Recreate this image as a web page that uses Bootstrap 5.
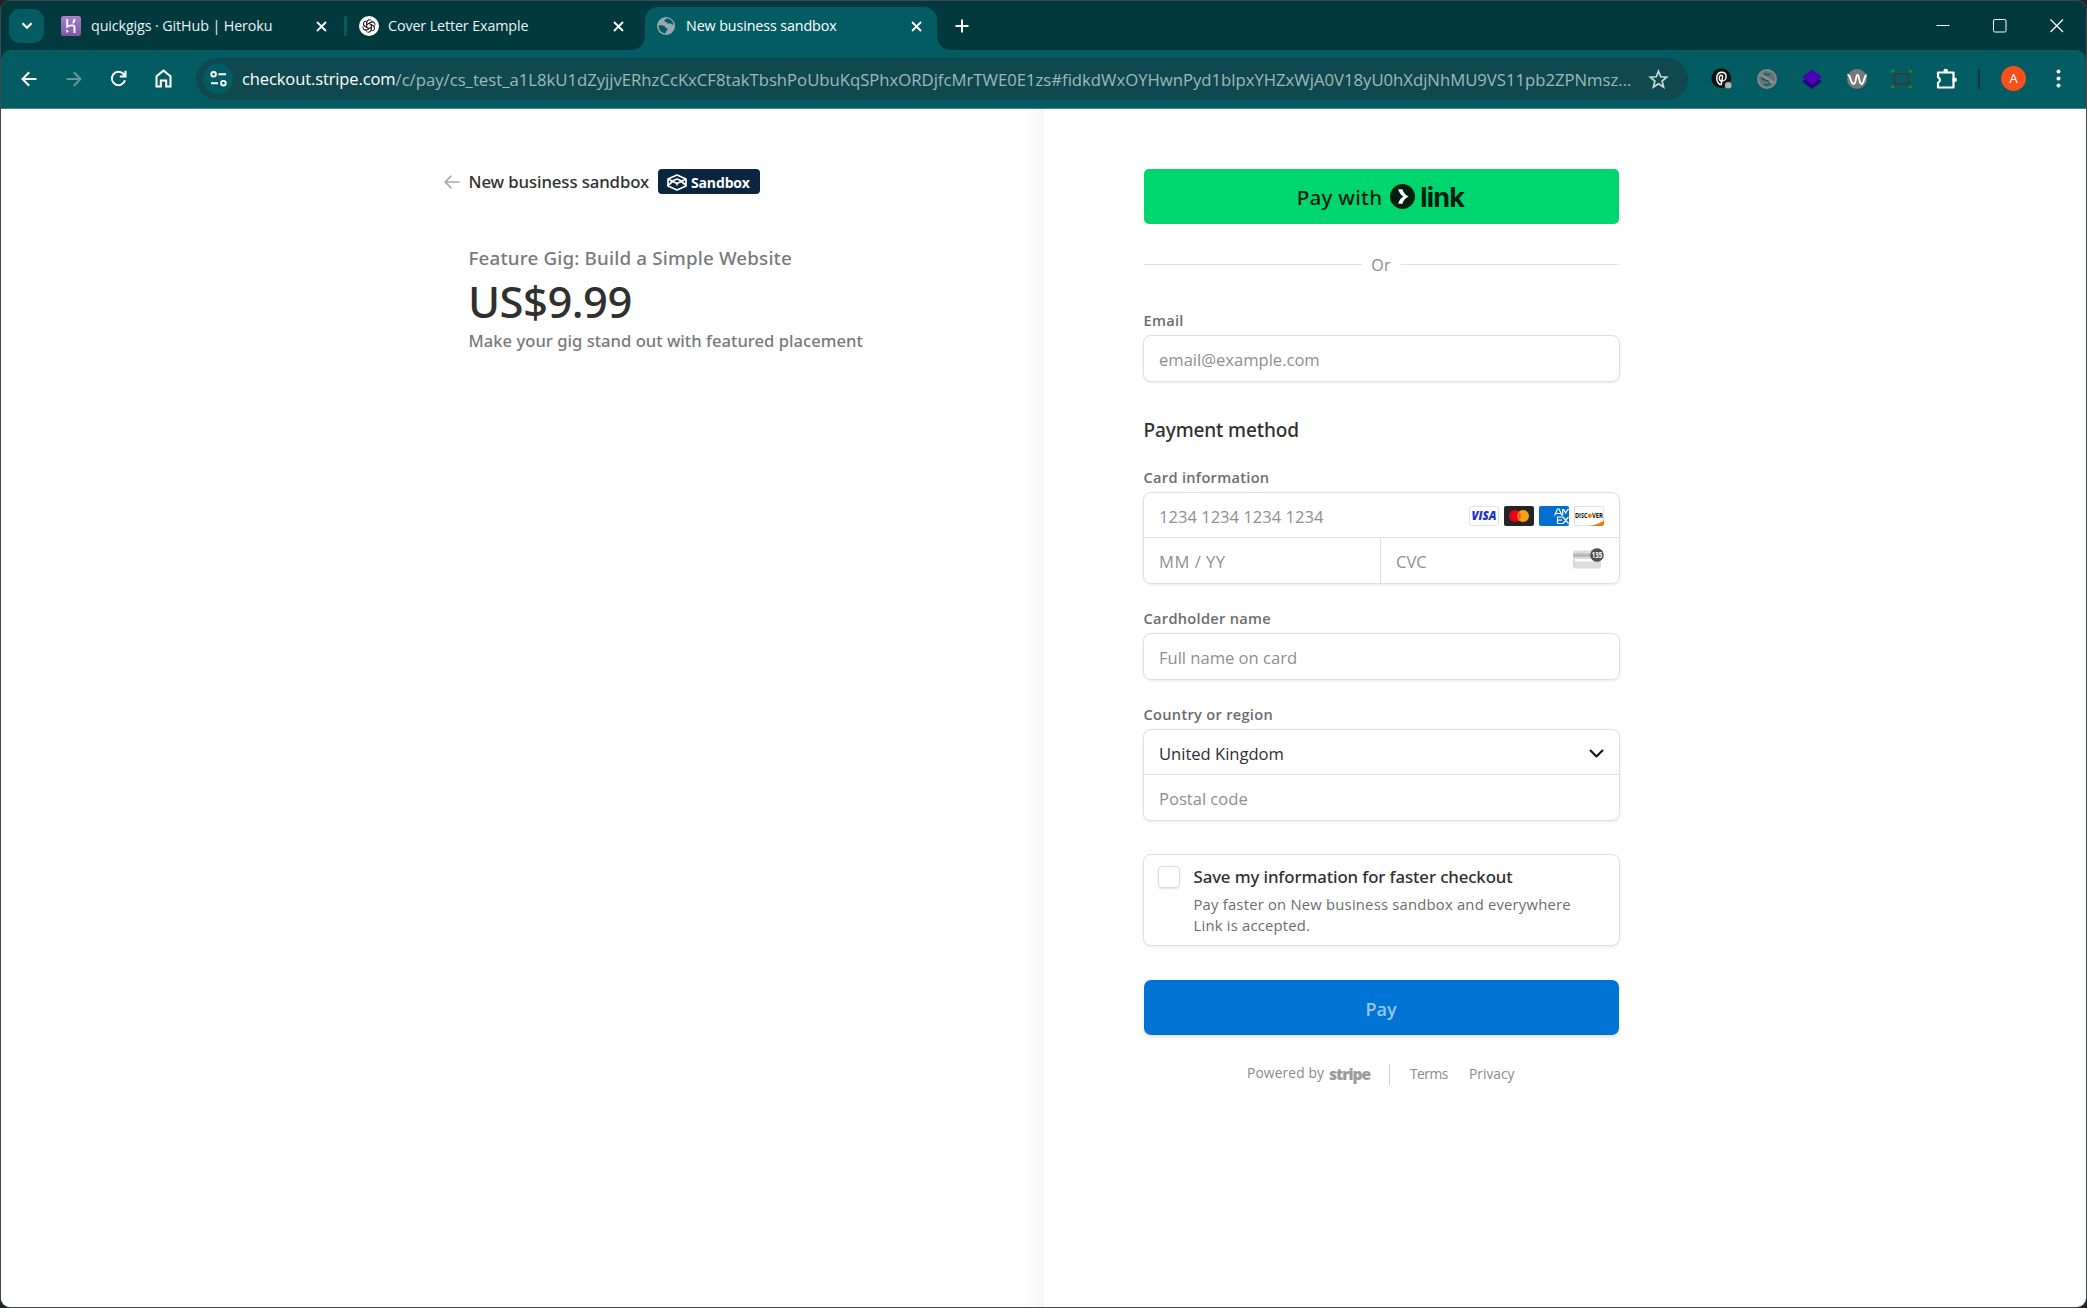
<!DOCTYPE html>
<html lang="en">
<head>
<meta charset="utf-8">
<title>New business sandbox</title>
<link rel="stylesheet" href="https://cdn.jsdelivr.net/npm/bootstrap@5.3.0/dist/css/bootstrap.min.css">
<script src="https://cdn.jsdelivr.net/npm/bootstrap@5.3.0/dist/js/bootstrap.bundle.min.js"></script>
<style>
  html, body { height: 100%; }
  body { font-family: "Open Sans", "Noto Sans", sans-serif; background: #232326; color: #303030; overflow: hidden; }
  svg { display: block; flex: none; }
  .window { height: 1308px; border: 1px solid #444648; border-radius: 10px; background: #02393f; }

  /* tab strip */
  .tabstrip { height: 49px; color: #e9f4f4; font-size: 14.3px; letter-spacing: -.11px; }
  .tab-search { width: 35px; height: 34px; margin: 0 0 0 8px; border-radius: 11px; background: #045c63; }
  .tab { height: 49px; padding-top: 1px; white-space: nowrap; }
  .tab-one { width: 300px; padding-left: 17px; }
  .tab-one .shut { margin-right: 17px; }
  .tab-two { width: 298px; padding-left: 12px; }
  .tab-two .shut { margin-right: 21px; }
  .tab-live .shut { margin-right: 15px; }
  .tab-title { margin-left: 10px; }
  .tab-two .tab-title { margin-left: 9px; }
  .tab-live { width: 292px; height: 43px; margin-top: 6px; padding: 0 0 5px 12px; background: #045c63; border-radius: 13px 13px 0 0; color: #fff; position: relative; white-space: nowrap; }
  .tab-live .tab-title { margin-left: 11px; }
  .tab-live::before, .tab-live::after { content: ""; position: absolute; bottom: 0; width: 13px; height: 13px; }
  .tab-live::before { left: -13px; background: radial-gradient(circle at 0 0, transparent 12.5px, #045c63 13px); }
  .tab-live::after { right: -13px; background: radial-gradient(circle at 100% 0, transparent 12.5px, #045c63 13px); }
  .tab-rule { width: 3px; height: 20px; border-radius: 2px; background: #045c63; }
  .new-tab { margin-left: 18px; }
  .window-controls { padding-right: 22px; gap: 43px; }

  /* toolbar */
  .toolbar { height: 59px; padding: 0 0 1px 5px; background: #045c63; border-bottom: 1px solid #3d858a; border-radius: 10px 10px 0 0; color: #fff; }
  .tool { width: 45px; height: 45px; }
  .omnibox { width: 1492px; height: 42px; margin-left: 10px; margin-right: 11px; padding-left: 7px; border-radius: 21px; background: #0f494f; white-space: nowrap; }
  .site-info { width: 30px; height: 30px; border-radius: 50%; background: #045c63; margin-right: 9px; }
  .url-host, .url-path { padding-top: 2px; font-size: 16.5px; letter-spacing: -.109px; }
  .url-path { font-size: 16.7px; letter-spacing: -.004px; color: #9fb9bb; }
  .star { margin-right: 19px; }
  .tool-rule { width: 2px; height: 20px; background: #02393f; margin-left: 9px; }
  .profile { width: 25px; height: 25px; border-radius: 50%; background: #f8501c; font-size: 13px; margin-left: 21px; }
  .menu-dots { margin-left: 30px; }

  /* summary */
  .page { height: 1198px; background: #fff; border-radius: 0 0 9px 9px; overflow: hidden; }
  .summary { width: 1043px; padding: 60px 0 0 442.500px; background: linear-gradient(to left, #f7f7f7, #fff 20px); font-family: "Noto Sans", sans-serif; font-weight: 500; }
  .merchant { height: 25px; font-size: 16.8px; letter-spacing: -.115px; white-space: nowrap; }
  .merchant-name { margin-left: 9px; width: 180px; }
  .sandbox-tag { width: 102px; height: 25px; padding: 1px 0 0 9px; margin-left: 9.500px; border-radius: 4px; background: #0a2540; color: #fff; font: 700 14px "Open Sans", sans-serif; letter-spacing: -.15px; }
  .product { margin: 51px 0 0 25px; line-height: 26px; font-size: 18.8px; letter-spacing: .16px; color: #7a7a7a; }
  .price { margin: 2px 0 0 24.500px; line-height: 56px; font-size: 43.5px; letter-spacing: -.5px; }
  .blurb { margin: 0 0 0 25px; line-height: 24px; font-size: 16.6px; letter-spacing: .02px; color: #7a7a7a; }

  /* checkout form */
  .checkout { width: 475px; margin-left: 100px; padding-top: 60px; }
  .btn-link-pay { height: 55px; border-radius: 5px; background: #00d66f; color: #011e0f; }
  .pay-with { font: 500 20.5px/30px "Noto Sans", sans-serif; letter-spacing: .3px; margin-left: -2px; }
  .link-mark { margin: 0 5px 0 8px; }
  .link-word { font-family: Inter, sans-serif; font-weight: 700; font-size: 27px; letter-spacing: -.8px; line-height: 30px; padding-top: 2px; }
  .divider { height: 20px; margin-top: 30px; font-size: 16px; letter-spacing: .3px; color: #8a8a8a; }
  .divider-line { height: 1px; background: #e3e3e3; flex: 1; }
  .divider-text { padding: 1px 10px 0 9px; }
  .field-label { display: block; line-height: 20px; margin: 24px 0 5px -.5px; font-size: 14.6px; letter-spacing: .3px; font-weight: 600; color: #6c6c6c; }
  .after-divider { margin-top: 36px; }
  .section-title { line-height: 26px; margin: 35px 0 0 -.5px; font: 500 19px/26px "Noto Sans", sans-serif; letter-spacing: -.12px; }
  .box { margin: 0 -1px; border: 1px solid #e0e0e0; border-radius: 8px; background: #fff; box-shadow: 0 1px 3px rgba(0,0,0,.09); overflow: hidden; }
  .box .form-control { border: 0; height: 45px; padding: 1px 0 0 15px; font-size: 16.6px; letter-spacing: -.02px; color: #303030; background: transparent; box-shadow: none; border-radius: 0; min-width: 0; }
  .box .form-control::placeholder { color: #8f8f8f; opacity: 1; }
  .row-first { height: 45px; border-bottom: 1px solid #e0e0e0; padding-right: 15px; }
  .row-first .form-control { padding-top: 2px; }
  .row-second { padding-right: 15px; }
  .brands { gap: 5px; padding-top: 1px; }
  .half { width: 237px; flex: none; border-right: 1px solid #e0e0e0; }
  .half .form-control { letter-spacing: .5px; }
  .cvc-icon { margin-top: -4px; }
  .save-box { height: 92px; margin-top: 33px; padding: 11px 14px; gap: 14px; }
  .tick { width: 22px; height: 22px; border: 1px solid #dcdcdc; border-radius: 4px; box-shadow: 0 1px 2px rgba(0,0,0,.12); flex: none; }
  .save-title { margin: -1px 0 0 -.5px; font: 500 16.8px/24px "Noto Sans", sans-serif; letter-spacing: -.1px; }
  .save-note { line-height: 21px; margin: 5px 0 0 -.5px; font-size: 14.8px; letter-spacing: .215px; color: #6c6c6c; white-space: nowrap; }
  .btn-submit { height: 55px; margin-top: 34px; padding: 3px 1px 0 0; border: 0; border-radius: 7px; background: #0074d4; color: #99c7ee; font-size: 18px; font-weight: 600; box-shadow: 0 2px 4px rgba(0,0,0,.12); }
  .foot { height: 21px; margin-top: 29px; padding-left: 103px; font-size: 13.8px; color: #8a8a8a; white-space: nowrap; }
  .powered { width: 82px; letter-spacing: .12px; padding-bottom: 2px; }
  .stripe-word { width: 41px; font-weight: 800; font-size: 15.5px; line-height: 20px; letter-spacing: -1px; padding-bottom: 2px; color: #9b9b9b; }
  .foot-rule { width: 1px; height: 21px; background: #cfcfcf; margin: 0 20px 0 19px; }
  .terms { width: 59px; letter-spacing: -.5px; }
</style>
</head>
<body>
<div class="window">
  <div class="tabstrip d-flex align-items-center">
    <div class="tab-search d-flex align-items-center justify-content-center">
      <svg width="12" height="8" viewBox="0 0 12 8" fill="none" stroke="#fff" stroke-width="2.2"><path d="M1.500 1.200 6 5.800l4.500-4.600"/></svg>
    </div>
    <div class="tab tab-one d-flex align-items-center">
      <svg width="20" height="20" viewBox="0 0 20 20"><defs><linearGradient id="hk" x1="0" y1="0" x2="0" y2="1"><stop offset="0" stop-color="#a983cb"/><stop offset="1" stop-color="#7d55a8"/></linearGradient></defs><rect width="20" height="20" rx="2.500" fill="url(#hk)"/><path d="M6.200 3v7.600c2-1 7.300-2.400 7.300.6V17M13.500 3c0 1.700-.6 3-1.700 4.100" fill="none" stroke="#fff" stroke-width="1.900"/><path d="M5.300 13.200 7.800 15.200 5.300 17.300z" fill="#fff"/></svg>
      <span class="tab-title">quickgigs · GitHub | Heroku</span>
      <svg class="shut ms-auto" width="11" height="11" viewBox="0 0 11 11" stroke="#fff" stroke-width="1.800"><path d="M1 1l9 9M10 1l-9 9"/></svg>
    </div>
    <div class="tab-rule"></div>
    <div class="tab tab-two d-flex align-items-center">
      <svg width="20" height="20" viewBox="0 0 20 20"><circle cx="10" cy="10" r="10" fill="#fff"/><g fill="none" stroke="#222" stroke-width=".95"><g id="petal"><path d="M7.700 11.300V6.300a2.700 2.700 0 0 1 5-1.300M7.700 8.600 11.700 6.300a2.700 2.700 0 0 1 3.300.5"/></g><use href="#petal" transform="rotate(60 10 10)"/><use href="#petal" transform="rotate(120 10 10)"/><use href="#petal" transform="rotate(180 10 10)"/><use href="#petal" transform="rotate(240 10 10)"/><use href="#petal" transform="rotate(300 10 10)"/></g></svg>
      <span class="tab-title">Cover Letter Example</span>
      <svg class="shut ms-auto" width="11" height="11" viewBox="0 0 11 11" stroke="#fff" stroke-width="1.800"><path d="M1 1l9 9M10 1l-9 9"/></svg>
    </div>
    <div class="tab-live d-flex align-items-center">
      <svg width="18" height="18" viewBox="0 0 18 18"><circle cx="9" cy="9" r="9" fill="#9aa7ae"/><path d="M9.500 1.500c-1 .8-2 1-2 2.300 0 1 .8 1.200 1.800 1.200.8 0 .6 1.300 1.400 1.500 1.300.4 2.300-.6 3.500.2.900.7 1.800 1.300 2.300 1.200-.2-3.500-3-6.400-7-6.400zM1.600 8.200c2.200-.1 5 0 6 .8 1 1 .4 2 2 2.300 1.300.2 1.300 1.200.5 2-1 1-1.600 1.800-1.500 3.100-4-.2-7.200-3.700-7-8.200z" fill="#045c63"/></svg>
      <span class="tab-title">New business sandbox</span>
      <svg class="shut ms-auto" width="11" height="11" viewBox="0 0 11 11" stroke="#fff" stroke-width="1.800"><path d="M1 1l9 9M10 1l-9 9"/></svg>
    </div>
    <svg class="new-tab" width="14" height="14" viewBox="0 0 14 14" stroke="#fff" stroke-width="1.900"><path d="M7 .5v13M.5 7h13"/></svg>
    <div class="window-controls ms-auto d-flex align-items-center">
      <svg width="14" height="14" viewBox="0 0 14 14"><path d="M.5 6.500h13" stroke="#fff"/></svg>
      <svg width="14" height="14" viewBox="0 0 14 14"><rect x=".5" y=".5" width="12.500" height="12.500" rx="1.500" fill="none" stroke="#fff"/></svg>
      <svg width="14" height="14" viewBox="0 0 14 14" stroke="#fff" stroke-width="1.200"><path d="M.5.500l12.500 12.500M13 .5.500 13"/></svg>
    </div>
  </div>

  <div class="toolbar d-flex align-items-center">
    <div class="tool d-flex align-items-center justify-content-center"><svg width="16" height="16" viewBox="0 0 16 16" fill="none" stroke="#fff" stroke-width="2"><path d="M15.500 8H2M8.200 1.200 1.500 8l6.700 6.800"/></svg></div>
    <div class="tool d-flex align-items-center justify-content-center"><svg width="16" height="16" viewBox="0 0 16 16" fill="none" stroke="#62979b" stroke-width="2"><path d="M.5 8H14M7.800 1.200 14.500 8l-6.700 6.800"/></svg></div>
    <div class="tool d-flex align-items-center justify-content-center"><svg width="17" height="17" viewBox="0 0 17 17" fill="none" stroke="#fff" stroke-width="2"><path d="M15 10.300A6.700 6.700 0 1 1 13.600 4l1.400 1.700M15.500.8v5.700H9.800"/></svg></div>
    <div class="tool d-flex align-items-center justify-content-center"><svg width="17" height="19" viewBox="0 0 17 19" fill="none" stroke="#fff" stroke-width="2"><path d="M1.500 7.200 8.500 1.600l7 5.600V17.500h-4.300v-6H5.800v6H1.500z"/></svg></div>
    <div class="omnibox d-flex align-items-center">
      <div class="site-info d-flex align-items-center justify-content-center"><svg width="17" height="16" viewBox="0 0 17 16" fill="none" stroke="#fff" stroke-width="1.900"><circle cx="3.600" cy="3.300" r="2.300"/><path d="M8.500 3.300H16M1 12.200h7"/><circle cx="13.400" cy="12.200" r="2.300"/></svg></div>
      <span class="url-host">checkout.stripe.com</span><span class="url-path">/c/pay/cs_test_a1L8kU1dZyjjvERhzCcKxCF8takTbshPoUbuKqSPhxORDjfcMrTWE0E1zs#fidkdWxOYHwnPyd1blpxYHZxWjA0V18yU0hXdjNhMU9VS11pb2ZPNmsz...</span>
      <svg class="star ms-auto" width="21" height="20" viewBox="0 0 21 20" fill="none" stroke="#c8d8d9" stroke-width="1.700"><path d="M10.500 2.200l2.200 5.600 6 .4-4.600 3.900 1.500 5.900-5.100-3.300L5.400 18l1.500-5.900-4.600-3.900 6-.4z"/></svg>
    </div>
    <div class="tool d-flex align-items-center justify-content-center"><svg width="21" height="21" viewBox="0 0 21 21"><circle cx="10.300" cy="10.300" r="10" fill="#141417"/><path d="M6.300 13.300C4.600 9 6.500 4.200 10.500 4.200c3 0 4.600 2 4.600 4.300 0 2.800-1.900 4.600-4 4.600-2 0-2.800-1.400-2.800-3.200 0-1.600.8-2.600 1.900-2.600 1.200 0 1.600 1 1.300 2.400L10.200 16.500c-1.500.3-2.900-.8-3.900-3.200" fill="none" stroke="#fff" stroke-width="1.400"/><circle cx="17.200" cy="17.300" r="3.300" fill="#b4b4b4"/></svg></div>
    <div class="tool d-flex align-items-center justify-content-center"><svg width="20" height="20" viewBox="0 0 20 20" fill="none"><circle cx="10" cy="10" r="9" fill="#5f7779" stroke="#858788" stroke-width="2"/><path d="M4 5.500 16.500 14" stroke="#8a8c8d" stroke-width="3"/><path d="M5.300 8.500c-.5 1 1 2 2.500 2.500l4 1.500M7 4.800c1.500 1 4.500 1 6 0M7 15.300c2 1 4.300.7 6-.6" stroke="#045c63" stroke-width="1.600"/></svg></div>
    <div class="tool d-flex align-items-center justify-content-center"><svg width="20" height="20" viewBox="0 0 20 20"><path d="M0 12.500 10 6l10 6.500L10 20z" fill="#22067c"/><path d="M0 8 10 .5 20 8l-10 7.500z" fill="#4a00b4"/></svg></div>
    <div class="tool d-flex align-items-center justify-content-center"><svg width="20" height="20" viewBox="0 0 20 20"><circle cx="10" cy="10" r="10" fill="#787878"/><path d="M.5 6C3.500 5 3.500 15 6.500 15S8.500 6 10.500 6s1.500 9 4 9S17 7 19.500 6" fill="none" stroke="#fff" stroke-width="1.900"/></svg></div>
    <div class="tool d-flex align-items-center justify-content-center"><svg width="21" height="20" viewBox="0 0 21 20" fill="none"><rect x="3.500" y="5" width="14" height="10" stroke="#3b3b3b" stroke-width="2"/><g fill="#2f8f1e"><path d="M.5 1h3.500L.5 4.500zM20.500 1H17l3.500 3.500zM.5 19h3.500L.5 15.500zM20.500 19H17l3.500-3.500z"/></g></svg></div>
    <div class="tool d-flex align-items-center justify-content-center"><svg width="21" height="22" viewBox="0 0 21 22"><path d="M2 4.500h15.500v15H2v-4.800a3 3 0 0 0 0-5.600z" fill="none" stroke="#fff" stroke-width="2.200" stroke-linejoin="round"/><circle cx="9.700" cy="3" r="2.300" fill="#fff"/><circle cx="18.600" cy="11.800" r="2.300" fill="#fff"/></svg></div>
    <div class="tool-rule"></div>
    <div class="profile d-flex align-items-center justify-content-center">A</div>
    <svg class="menu-dots" width="5" height="19" viewBox="0 0 5 19" fill="#fff"><circle cx="2.500" cy="2.500" r="2"/><circle cx="2.500" cy="9.500" r="2"/><circle cx="2.500" cy="16.500" r="2"/></svg>
  </div>

  <div class="page d-flex">
    <section class="summary">
      <div class="merchant d-flex align-items-center">
        <svg width="16" height="14" viewBox="0 0 16 14" fill="none" stroke="#a3a3a3" stroke-width="1.600" stroke-linecap="round" stroke-linejoin="round"><path d="M15 7H1.200M6.800 1.200 1.200 7l5.600 5.800"/></svg>
        <span class="merchant-name">New business sandbox</span>
        <span class="sandbox-tag d-flex align-items-center">
          <svg class="me-1" width="20" height="17" viewBox="0 0 20 17" fill="none" stroke="#fff" stroke-width="1.700" stroke-linejoin="round"><path d="M10 1 19 5v7l-9 4-9-4V5zM1 5l9 4.500L19 5M10 9.500v2M1 11.500l5.500-5L10 5l3.500 1.500 5.500 5"/></svg>
          <span>Sandbox</span>
        </span>
      </div>
      <div class="product">Feature Gig: Build a Simple Website</div>
      <div class="price">US$9.99</div>
      <div class="blurb">Make your gig stand out with featured placement</div>
    </section>

    <form class="checkout">
      <button type="button" class="btn btn-link-pay w-100 p-0 d-flex align-items-center justify-content-center">
        <span class="pay-with">Pay with</span>
        <svg class="link-mark" width="25" height="25" viewBox="0 0 25 25"><circle cx="12.500" cy="12.500" r="12.500" fill="#011e0f"/><path d="M8.200 5.200h4.200c.8 3.300 3 5.800 6.200 7.300-3.200 1.500-5.400 4-6.200 7.300H8.200c.8-3.200 2.600-5.700 5.200-7.300-2.600-1.600-4.400-4.100-5.200-7.300z" fill="#fff"/></svg>
        <span class="link-word">link</span>
      </button>
      <div class="divider d-flex align-items-center"><span class="divider-line"></span><span class="divider-text">Or</span><span class="divider-line"></span></div>
      <label class="field-label after-divider">Email</label>
      <div class="box"><input class="form-control" placeholder="email@example.com"></div>
      <h2 class="section-title">Payment method</h2>
      <label class="field-label">Card information</label>
      <div class="box">
        <div class="row-first d-flex align-items-center">
          <input class="form-control" placeholder="1234 1234 1234 1234">
          <div class="brands d-flex">
            <svg width="30" height="20" viewBox="0 0 30 20"><rect x=".5" y=".5" width="29" height="19" rx="2" fill="#fff" stroke="#dfe1e6"/><text x="15" y="14.300" text-anchor="middle" font-family="Open Sans" font-size="11.500" font-weight="800" font-style="italic" fill="#1a2fd0" textLength="25" lengthAdjust="spacingAndGlyphs">VISA</text></svg>
            <svg width="30" height="20" viewBox="0 0 30 20"><rect width="30" height="20" rx="2" fill="#252525"/><circle cx="11" cy="10" r="6" fill="#eb001b"/><circle cx="19" cy="10" r="6" fill="#f79e1b"/><path d="M15 5.500a6 6 0 0 1 0 9 6 6 0 0 1 0-9z" fill="#ff5f00"/></svg>
            <svg width="30" height="20" viewBox="0 0 30 20"><rect width="30" height="20" rx="2" fill="#016fd0"/><g fill="none" stroke="#fff" stroke-width="1.200"><path d="M15.500 9.500 18.500 3h1.500l3 6.500M17 7.500h4.500M23.700 9.500V3.500h1l2 3.500 2-3.500H30M18.500 17.500v-6.500H24M18.500 14.200H23M18.500 17.500H24M24 11l5.500 6.500M29.500 11 24 17.500"/></g></svg>
            <svg width="30" height="20" viewBox="0 0 30 20"><rect x=".5" y=".5" width="29" height="19" rx="2" fill="#fff" stroke="#dfe1e6"/><path d="M30 14.500V18a2 2 0 0 1-2 2H15.500c6-1 11-3 14.500-5.500z" fill="#f27712"/><text x="1" y="12.200" font-family="Open Sans" font-size="6.500" font-weight="700" fill="#111" textLength="12.500" lengthAdjust="spacingAndGlyphs">DISC</text><circle cx="15.700" cy="9.800" r="2.100" fill="#f27712"/><text x="18" y="12.200" font-family="Open Sans" font-size="6.500" font-weight="700" fill="#111" textLength="11" lengthAdjust="spacingAndGlyphs">VER</text></svg>
          </div>
        </div>
        <div class="row-second d-flex align-items-center">
          <div class="half"><input class="form-control" placeholder="MM / YY"></div>
          <input class="form-control" placeholder="CVC">
          <svg class="cvc-icon" width="31" height="21" viewBox="0 0 31 21"><rect x="0" y="2.500" width="28" height="18" rx="2" fill="#dcdcdc"/><rect y="5.500" width="28" height="3.500" fill="#b9b9b9"/><rect x="2" y="11" width="18" height="2.500" fill="#fff"/><circle cx="24" cy="7" r="6.800" fill="#4f4f4f"/><text x="24" y="10" text-anchor="middle" font-family="Open Sans" font-size="8" font-weight="700" fill="#fff" textLength="10.500" lengthAdjust="spacingAndGlyphs">135</text></svg>
        </div>
      </div>
      <label class="field-label">Cardholder name</label>
      <div class="box"><input class="form-control" placeholder="Full name on card"></div>
      <label class="field-label">Country or region</label>
      <div class="box">
        <div class="row-first d-flex align-items-center">
          <input class="form-control" value="United Kingdom">
          <svg class="mt-1" width="15" height="10" viewBox="0 0 15 10" fill="none" stroke="#111" stroke-width="2" stroke-linecap="round" stroke-linejoin="round"><path d="M1.500 1.500l6 6 6-6"/></svg>
        </div>
        <input class="form-control" placeholder="Postal code">
      </div>
      <div class="box save-box d-flex">
        <span class="tick"></span>
        <div>
          <div class="save-title">Save my information for faster checkout</div>
          <div class="save-note">Pay faster on New business sandbox and everywhere<br>Link is accepted.</div>
        </div>
      </div>
      <button type="button" class="btn btn-submit w-100 d-flex align-items-center justify-content-center">Pay</button>
      <div class="foot d-flex align-items-center">
        <span class="powered">Powered by</span><span class="stripe-word">stripe</span>
        <span class="foot-rule"></span>
        <span class="terms">Terms</span><span>Privacy</span>
      </div>
    </form>
  </div>
</div>
</body>
</html>
